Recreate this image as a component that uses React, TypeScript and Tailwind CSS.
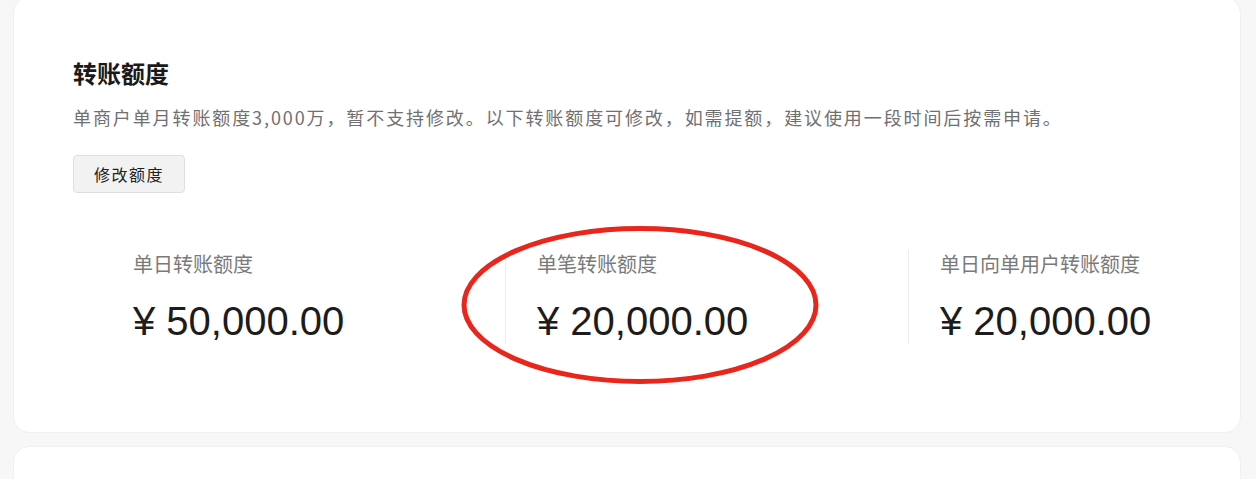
const cjk = "font-['Noto_Sans_CJK_SC','Noto_Sans',sans-serif]"
const num = "font-['Liberation_Sans','Noto_Sans_CJK_SC',sans-serif]"

const limits = [
  { label: '单日转账额度', amount: '¥ 50,000.00', width: 'w-[404px] pl-8' },
  { label: '单笔转账额度', amount: '¥ 20,000.00', width: 'w-[403px] pl-[31px] border-l border-[#ececec]' },
  { label: '单日向单用户转账额度', amount: '¥ 20,000.00', width: 'flex-1 pl-[31px] border-l border-[#ececec]' },
]

function LimitStat({ label, amount, width }: { label: string; amount: string; width: string }) {
  return (
    <div className={`${width} flex flex-col`}>
      <div className={`${cjk} text-[20px] leading-[28px] text-[#7a7a7a]`}>{label}</div>
      <div className={`${num} mt-[20px] text-[40px] leading-[46px] text-[#1c1c1c]`}>{amount}</div>
    </div>
  )
}

export default function App() {
  return (
    <div className="h-[479px] bg-[#f7f7f7] pl-[13px] pr-[15px] overflow-hidden">
      {/* 转账额度卡片 */}
      <div className="relative -mt-[3px] h-[436px] rounded-2xl bg-white border border-[#f0f0f0] pt-[57px] pl-[59px]">
        <h2 className={`${cjk} text-[24px] leading-9 font-bold text-[#1a1a1a]`}>转账额度</h2>
        <p className={`${cjk} mt-3 text-[18px] leading-[28px] tracking-[1.9px] text-[#707070]`}>
          单商户单月转账额度3,000万，暂不支持修改。以下转账额度可修改，如需提额，建议使用一段时间后按需申请。
        </p>
        <button
          className={`${cjk} mt-[24px] h-[38px] w-[112px] rounded border border-[#dedede] bg-[#f2f2f2] text-[16px] tracking-[1.5px] text-[#222]`}
        >
          修改额度
        </button>

        <div className="ml-7 mt-[57px] flex">
          {limits.map((l) => (
            <LimitStat key={l.label} {...l} />
          ))}
        </div>

        {/* 红圈标注 */}
        <svg
          className="absolute left-[441px] top-[222px] pointer-events-none"
          width="370"
          height="170"
          viewBox="0 0 370 170"
        >
          <ellipse cx="185" cy="85" rx="176" ry="76.5" fill="none" stroke="#e8261b" strokeWidth="5" />
        </svg>
      </div>

      {/* 下一张卡片 */}
      <div className="mt-[13px] h-[60px] rounded-2xl bg-white border border-[#f0f0f0]" />
    </div>
  )
}
